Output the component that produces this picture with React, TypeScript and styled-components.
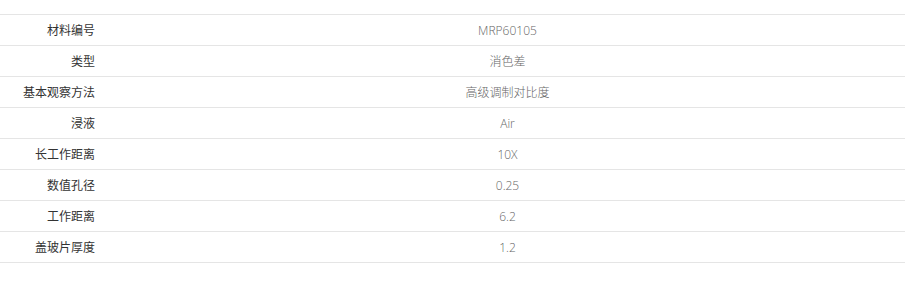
import * as React from 'react'
import styled, { createGlobalStyle } from 'styled-components';

const GlobalStyle = createGlobalStyle`
    body {
        margin: 0;
        background: #fff;
        font-family: "Open Sans", "Noto Sans CJK SC", sans-serif;
    }
`;

const Wrapper = styled.div`
    padding-top: 14px;
`;

const SpecTable = styled.div`
    display: flex;
    flex-direction: column;
    width: 905px;
    border-top: 1px solid #e5e5e5;
`;

const Row = styled.div`
    display: grid;
    grid-template-columns: 110px 1fr;
    height: 30px;
    align-items: center;
    border-bottom: 1px solid #e5e5e5;
    font-size: 12px;
`;

const Label = styled.div`
    text-align: right;
    padding-right: 15px;
    color: #333;
`;

const Value = styled.div`
    text-align: center;
    color: #666;
    font-weight: 300;
`;

const specs = [
    ['材料编号', 'MRP60105'],
    ['类型', '消色差'],
    ['基本观察方法', '高级调制对比度'],
    ['浸液', 'Air'],
    ['长工作距离', '10X'],
    ['数值孔径', '0.25'],
    ['工作距离', '6.2'],
    ['盖玻片厚度', '1.2'],
];

export default function App() {
    return (
        <>
            <GlobalStyle />
            <Wrapper>
                <SpecTable>
                    {specs.map(([k, v]) => (
                        <Row key={k}>
                            <Label>{k}</Label>
                            <Value>{v}</Value>
                        </Row>
                    ))}
                </SpecTable>
            </Wrapper>
        </>
    )
}
